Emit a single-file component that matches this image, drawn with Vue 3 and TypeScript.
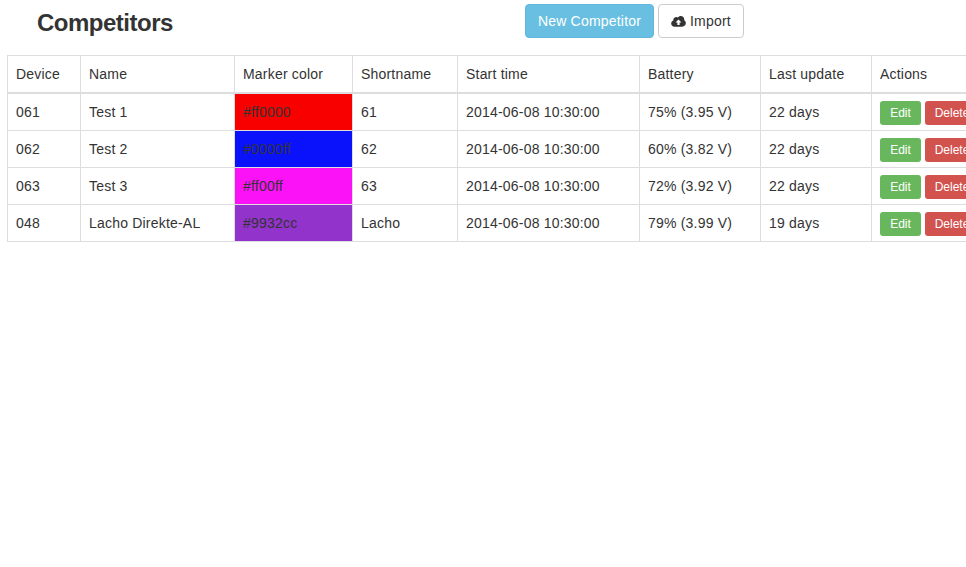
<script setup lang="ts">
interface Row {
  device: string
  name: string
  color: string
  fill: string
  short: string
  start: string
  battery: string
  update: string
}
const headers: string[] = ['Device', 'Name', 'Marker color', 'Shortname', 'Start time', 'Battery', 'Last update', 'Actions']
const rows: Row[] = [
  { device: '061', name: 'Test 1', color: '#ff0000', fill: '#f90000', short: '61', start: '2014-06-08 10:30:00', battery: '75% (3.95 V)', update: '22 days' },
  { device: '062', name: 'Test 2', color: '#0000ff', fill: '#0a12fb', short: '62', start: '2014-06-08 10:30:00', battery: '60% (3.82 V)', update: '22 days' },
  { device: '063', name: 'Test 3', color: '#ff00ff', fill: '#fb12f6', short: '63', start: '2014-06-08 10:30:00', battery: '72% (3.92 V)', update: '22 days' },
  { device: '048', name: 'Lacho Direkte-AL', color: '#9932cc', fill: '#9233cc', short: 'Lacho', start: '2014-06-08 10:30:00', battery: '79% (3.99 V)', update: '19 days' },
]
</script>

<template>
  <div class="page">
    <header class="top">
      <h1 class="title">Competitors</h1>
      <div class="tools">
        <button class="btn btn-new" type="button">New Competitor</button>
        <button class="btn btn-import" type="button">
          <svg class="cloud" viewBox="0 0 16 12" width="15" height="11" aria-hidden="true">
            <path fill="#333" fill-rule="evenodd" d="M3.6 11.6C1.6 11.6 0 10.1 0 8.1c0-1.5.9-2.8 2.3-3.3C2.3 4.7 2.3 4.6 2.3 4.5 2.3 2.7 3.8 1.2 5.6 1.2c.6 0 1.2.2 1.7.5C8 .7 9.200 0 10.500 0c2.100 0 3.800 1.700 3.800 3.800 0 .3 0 .6-.1.900C15.300 5.200 16 6.400 16 7.700c0 2.200-1.700 3.900-3.900 3.900H3.600zM8 3.700 4.800 7h2v2.900h2.400V7h2L8 3.700z" />
          </svg>
          <span>Import</span>
        </button>
      </div>
    </header>
    <table class="grid">
      <colgroup>
        <col class="c1" /><col class="c2" /><col class="c3" /><col class="c4" />
        <col class="c5" /><col class="c6" /><col class="c7" /><col class="c8" />
      </colgroup>
      <thead>
        <tr><th v-for="h in headers" :key="h">{{ h }}</th></tr>
      </thead>
      <tbody>
        <tr v-for="r in rows" :key="r.device">
          <td>{{ r.device }}</td>
          <td>{{ r.name }}</td>
          <td :style="{ backgroundColor: r.fill }">{{ r.color }}</td>
          <td>{{ r.short }}</td>
          <td>{{ r.start }}</td>
          <td>{{ r.battery }}</td>
          <td>{{ r.update }}</td>
          <td class="actions">
            <button class="mini edit" type="button">Edit</button>
            <button class="mini del" type="button">Delete</button>
          </td>
        </tr>
      </tbody>
    </table>
  </div>
</template>

<style>
html, body { margin: 0; background: #fff; overflow: hidden; }
</style>

<style scoped>
.page {
  width: 966px;
  height: 567px;
  overflow: hidden;
  font-family: "Liberation Sans", Arial, sans-serif;
  font-size: 14px;
  line-height: 20px;
  color: #333;
  letter-spacing: 0.2px;
}
.top {
  display: flex;
  align-items: flex-start;
  height: 55px;
  padding-left: 37px;
}
.title {
  margin: 9px 0 0;
  width: 488px;
  font-size: 24px;
  line-height: 28px;
  font-weight: 700;
  letter-spacing: -0.5px;
}
.tools {
  display: flex;
  gap: 4px;
  margin-top: 4px;
}
.btn {
  box-sizing: border-box;
  height: 34px;
  padding: 0 12px;
  border-radius: 4px;
  border: 1px solid #ccc;
  font: inherit;
  letter-spacing: 0.2px;
  background: #fff;
  color: #333;
  display: flex;
  align-items: center;
}
.btn-new {
  width: 129px;
  justify-content: center;
  padding: 0;
  color: #fff;
  background: #69bfe2;
  border-color: #5fb8dc;
}
.btn-import {
  width: 86px;
  gap: 4px;
}
.cloud { flex: none; }
.grid {
  margin-left: 7px;
  width: 1010px;
  table-layout: fixed;
  border-collapse: collapse;
}
.c1 { width: 73px; }
.c2 { width: 154px; }
.c3 { width: 118px; }
.c4 { width: 105px; }
.c5 { width: 182px; }
.c6 { width: 121px; }
.c7 { width: 111px; }
.c8 { width: 146px; }
th, td {
  border: 1px solid #ddd;
  padding: 8px;
  text-align: left;
  font-weight: 400;
  white-space: nowrap;
  overflow: hidden;
}
th {
  border-bottom-width: 2px;
}
.actions { padding: 7px 8px 5px; }
.mini {
  box-sizing: border-box;
  height: 24px;
  width: 41px;
  padding: 0;
  border-radius: 3px;
  border: 1px solid transparent;
  font-family: inherit;
  font-size: 12px;
  line-height: 18px;
  color: #fff;
  vertical-align: top;
}
.edit { background: #68b75c; margin-right: 4px; }
.del { background: #d2524e; width: 54px; }
</style>
